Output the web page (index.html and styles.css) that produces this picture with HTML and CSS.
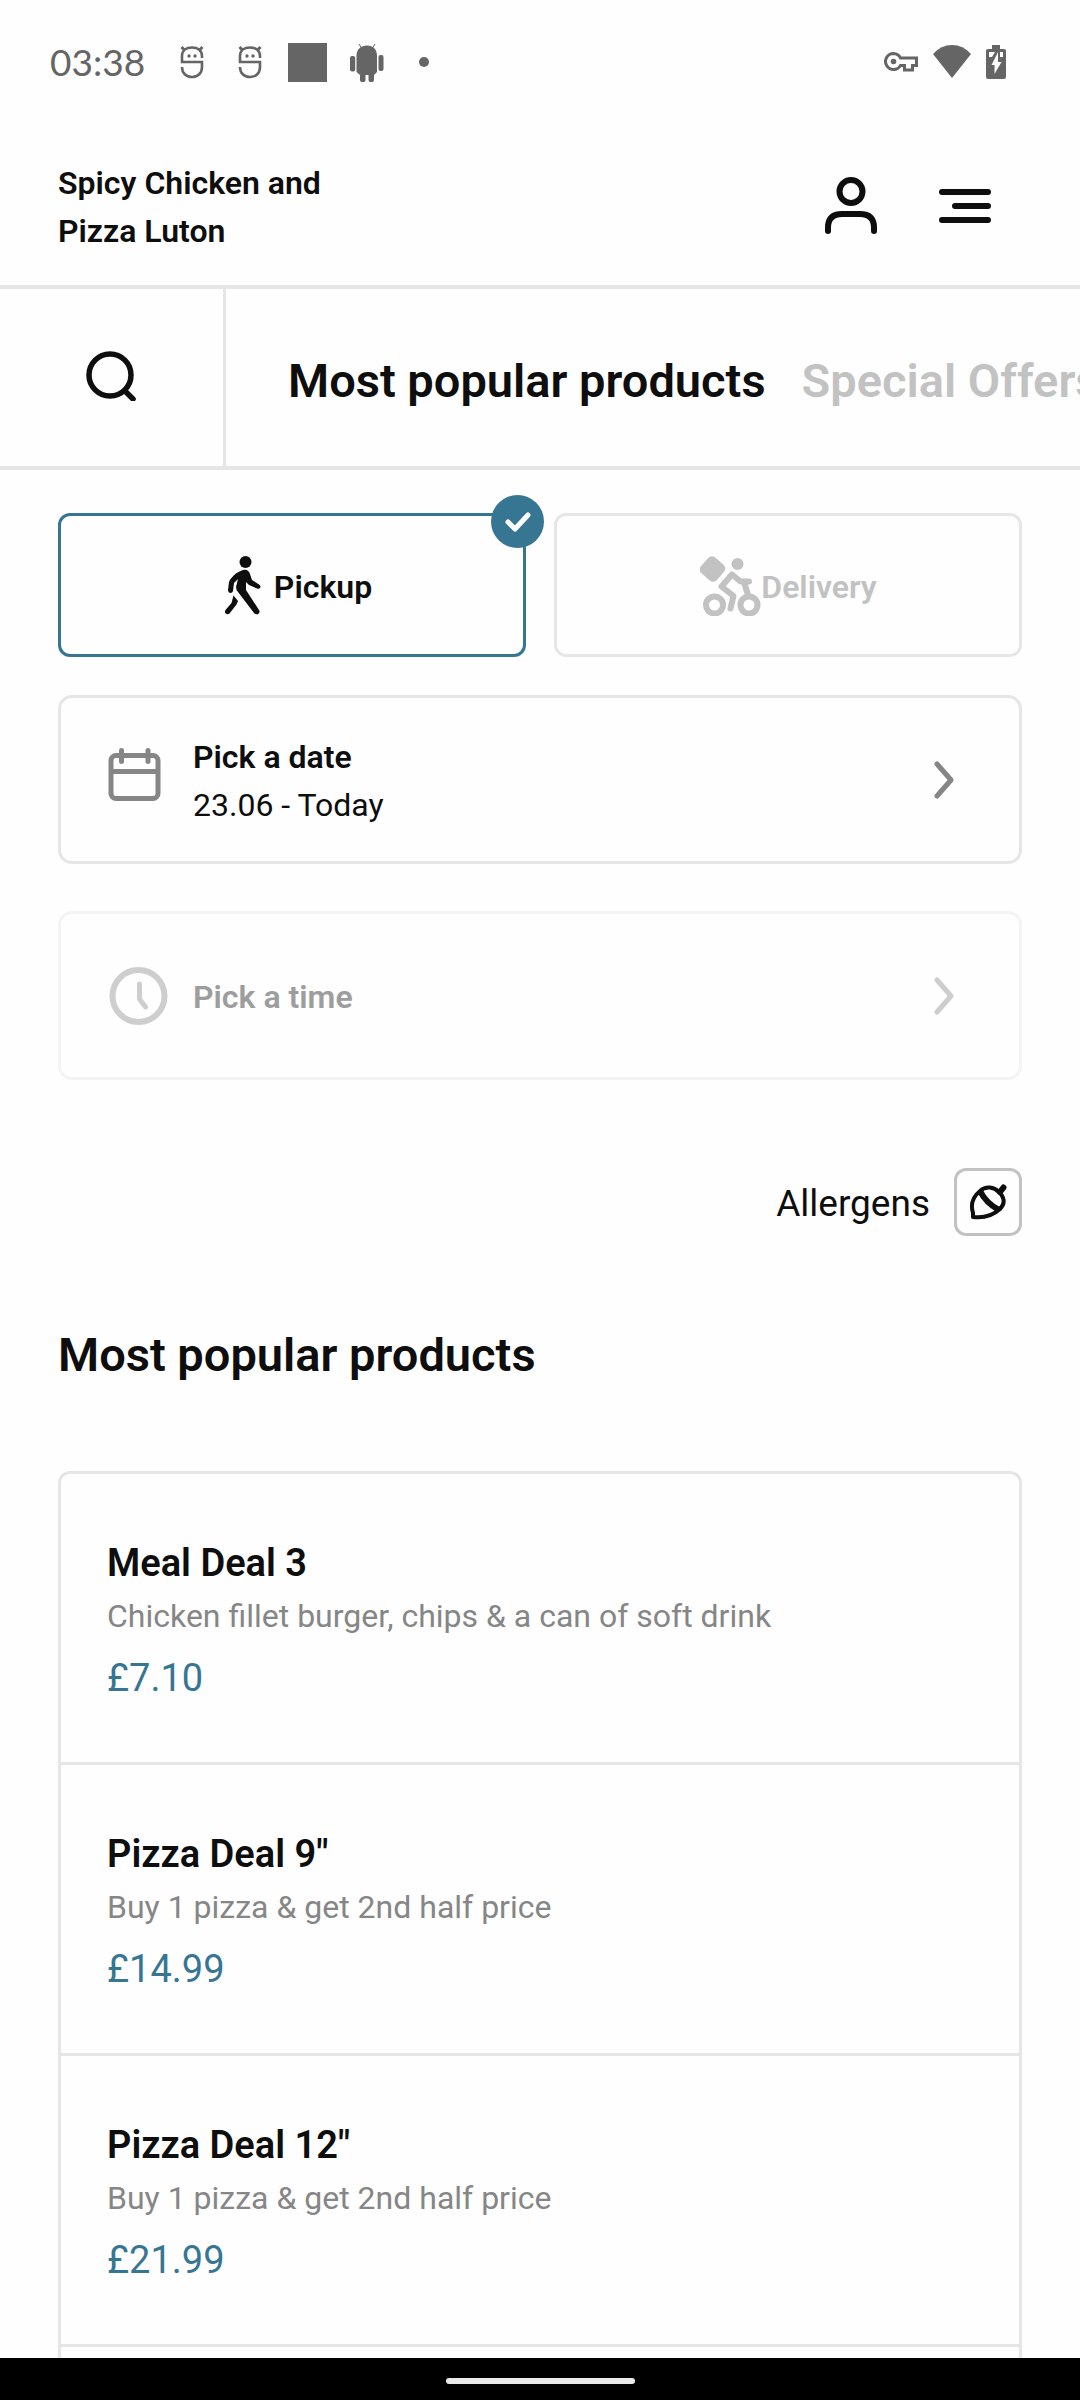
FILE: index.html
```html
<!DOCTYPE html>
<html lang="en">
<head>
  <meta charset="utf-8">
  <meta name="viewport" content="width=device-width, initial-scale=1">
  <title>Spicy Chicken and Pizza Luton</title>
  <link rel="stylesheet" href="styles.css">
</head>
<body>
  <svg class="sprite" aria-hidden="true">
    <symbol id="face" viewBox="0 0 24 34">
      <g fill="none" stroke="currentColor" stroke-width="2.600">
        <path d="M22 13V11C22 5.500 18 2.500 12 2.500S2 5.500 2 11v6h20v5c0 6-4 10-10 10S2 28 2 22"/>
        <path d="M1.500 2l3 3M22.500 2l-3 3" stroke-width="3"/>
      </g>
      <circle cx="9" cy="11" r="1.700" fill="currentColor"/><circle cx="15" cy="11" r="1.700" fill="currentColor"/>
    </symbol>
    <symbol id="chevron" viewBox="0 0 20 38">
      <path d="M3 3l14 16L3 35" fill="none" stroke="currentColor" stroke-width="5" stroke-linecap="round" stroke-linejoin="round"/>
    </symbol>
  </svg>

  <div class="status">
    <span class="clock">03:38</span>
    <svg class="face" width="24" height="34"><use href="#face"/></svg>
    <svg class="face" width="24" height="34"><use href="#face"/></svg>
    <span class="square"></span>
    <svg width="34" height="39" viewBox="0 0 34 39" fill="currentColor">
      <path d="M9 1l2.500 4M25 1l-2.500 4" stroke="currentColor" stroke-width="1"/>
      <path d="M6.500 13C6.500 6 11 2.500 17 2.500S27 6 27 13v16l-3 3v5a2.500 2 0 0 1-5.500 0v-5h-3v5a2.500 2 0 0 1-5.500 0v-5l-3.500-3z"/>
      <rect x="0" y="13" width="5.200" height="15.500" rx="2"/><rect x="28.500" y="12" width="5" height="16" rx="2"/>
    </svg>
    <span class="dot"></span>
    <div class="system">
      <svg width="34" height="20" viewBox="0 0 34 20">
        <path d="M9.500 1.500a8 8 0 1 0 7 12H20.500v4.500h8v-4.500h4v-7.500H16.500a8 8 0 0 0-7-4.500z" fill="none" stroke="currentColor" stroke-width="3"/>
        <circle cx="9.500" cy="9.500" r="2.800" fill="currentColor"/>
      </svg>
      <svg width="40" height="34" viewBox="0 0 40 34"><path d="M1 9Q9 0 20 0T39 9L20 33z" fill="currentColor"/></svg>
      <svg width="20" height="34" viewBox="0 0 20 34">
        <path d="M6 0h8v4h4a2 2 0 0 1 2 2v26a2 2 0 0 1-2 2H2a2 2 0 0 1-2-2V6a2 2 0 0 1 2-2h4z" fill="currentColor"/>
        <path d="M3 7h6l-3 5H3zM14 7h3v5h-3zM12 7v10h3.500L8.500 29v-9H5.500z" fill="#fefefe"/>
      </svg>
    </div>
  </div>

  <header class="header">
    <h1 class="brand">Spicy Chicken and Pizza Luton</h1>
    <div class="actions">
      <button class="icon-button" type="button" aria-label="Account">
        <svg width="52" height="60" viewBox="0 0 52 60" fill="none" stroke="currentColor" stroke-width="6" stroke-linecap="round">
          <circle cx="26" cy="14.500" r="11.500"/><path d="M3 54v-3.500Q3 37 17 37H35Q49 37 49 50.500V54"/>
        </svg>
      </button>
      <button class="icon-button" type="button" aria-label="Menu">
        <svg width="52" height="36" viewBox="0 0 52 36" fill="none" stroke="currentColor" stroke-width="6" stroke-linecap="round">
          <path d="M3 3h46M16 17h33M3 31h46"/>
        </svg>
      </button>
    </div>
  </header>

  <nav class="tabs" aria-label="Categories">
    <button class="search" type="button" aria-label="Search">
      <svg width="50" height="50" viewBox="0 0 50 50" fill="none" stroke="currentColor" stroke-width="5.500" stroke-linecap="round">
        <circle cx="24" cy="24" r="21"/><path d="M40 41l7 7"/>
      </svg>
    </button>
    <div class="tab-list">
      <a class="tab active" href="#popular">Most popular products</a>
      <a class="tab" href="#offers">Special Offers</a>
    </div>
  </nav>

  <main class="main">
    <div class="modes">
      <button class="mode selected" type="button" aria-pressed="true">
        <svg width="62" height="62" viewBox="0 0 62 62" fill="currentColor">
          <circle cx="33.500" cy="8" r="6"/>
          <path d="M31 16c4-1 6 1 7 4l2 6 7 4.500c3 2 1 5-2 4l-8-3.500-3-3v8l13 20c2 3-2 6-5 3L26 38q-2-2-2-5l2-8-4 4-1 8c-1 3-5 2.500-5-1l1-8q.5-2 2-3.500c3-4 7-7 12-8.500zM21.500 41.500l4.500 5.500-1.500 3.500-7 9c-2 2-6 0-4-3.500l6-7z"/>
        </svg>
        <span class="mode-name">Pickup</span>
        <span class="badge">
          <svg width="26" height="20" viewBox="0 0 26 20" fill="none" stroke="currentColor" stroke-width="5" stroke-linecap="round" stroke-linejoin="round"><path d="M3 10l7 7L23 3"/></svg>
        </span>
      </button>
      <button class="mode" type="button" aria-pressed="false">
        <svg width="62" height="62" viewBox="0 0 62 62" fill="none" stroke="currentColor">
          <rect x="3" y="4.500" width="21" height="21" rx="5" transform="rotate(41 13.500 15)" fill="currentColor" stroke="none"/>
          <circle cx="38.500" cy="10" r="6" fill="currentColor" stroke="none"/>
          <circle cx="15.500" cy="51" r="8.500" stroke-width="6"/><circle cx="50" cy="51" r="8.500" stroke-width="6"/>
          <path d="M49 41L45 28M50 27.500h-8.500L33 20.500 22.500 32.500l12 9.500-3 12.500" stroke-width="6" stroke-linecap="round" stroke-linejoin="round"/>
        </svg>
        <span class="mode-name">Delivery</span>
      </button>
    </div>

    <button class="picker" type="button">
      <svg width="64" height="64" viewBox="0 0 64 64" fill="none" stroke="currentColor" stroke-width="5">
        <rect x="5" y="7.500" width="47" height="43" rx="5"/><path d="M5 23.500h47"/><path d="M15.500 2.500v11M42 2.500v11" stroke-linecap="round"/>
      </svg>
      <span class="picker-text"><strong>Pick a date</strong><span>23.06 - Today</span></span>
      <svg class="chevron" width="20" height="38"><use href="#chevron"/></svg>
    </button>

    <button class="picker off" type="button" disabled>
      <svg width="64" height="64" viewBox="0 0 64 64" fill="none" stroke="currentColor" stroke-linecap="round" stroke-linejoin="round">
        <circle cx="32.500" cy="32" r="26" stroke-width="6"/><path d="M33.500 20v15l6 8" stroke-width="5"/>
      </svg>
      <span class="picker-text"><strong>Pick a time</strong></span>
      <svg class="chevron" width="20" height="38"><use href="#chevron"/></svg>
    </button>

    <div class="allergens">
      <label class="allergens-label" for="allergens">Allergens</label>
      <button class="nut" id="allergens" type="button">
        <svg width="38" height="38" viewBox="0 0 38 38" fill="none" stroke="currentColor" stroke-width="4" stroke-linecap="round" stroke-linejoin="round">
          <path d="M4 30Q0 17 11 8C17 2.500 25 4 30 9S37 20 31 26Q20 36 4 34z"/>
          <path d="M11 8Q17 20 30 27" stroke-width="6" stroke-linecap="butt"/><path d="M31 9L34.500 4.500" stroke-width="6"/>
        </svg>
      </button>
    </div>

    <h2 class="section-title" id="popular">Most popular products</h2>
    <ul class="products">
      <li class="product"><h3>Meal Deal 3</h3><p class="description">Chicken fillet burger, chips &amp; a can of soft drink</p><p class="price">£7.10</p></li>
      <li class="product"><h3>Pizza Deal 9"</h3><p class="description">Buy 1 pizza &amp; get 2nd half price</p><p class="price">£14.99</p></li>
      <li class="product"><h3>Pizza Deal 12"</h3><p class="description">Buy 1 pizza &amp; get 2nd half price</p><p class="price">£21.99</p></li>
      <li class="product"></li>
    </ul>
  </main>

  <div class="navbar"><span class="handle"></span></div>
</body>
</html>
```
FILE: styles.css
```css
* { box-sizing: border-box; }

body {
  --ink: #0e0e0e;
  --line: #e6e6e6;
  --accent: #367693;
  --muted: #868686;
  --pale: #c2c2c2;
  display: flex;
  flex-direction: column;
  height: 100vh;
  margin: 0;
  background: #fefefe;
  color: var(--ink);
  font-family: Roboto, "Liberation Sans", sans-serif;
  font-size: 32px;
  line-height: 48px;
}

h1, h2, h3, p, ul { margin: 0; padding: 0; }
svg { display: block; flex: none; }
.sprite { position: absolute; width: 0; height: 0; }

button {
  padding: 0;
  border: 0;
  background: none;
  color: inherit;
  font: inherit;
  text-align: left;
}

/* System status bar */
.status {
  display: flex;
  flex: none;
  align-items: center;
  padding: 38px 74px 42px 50px;
  color: #656565;
}
.clock { width: 130px; font-family: Lato, sans-serif; font-size: 37px; }
.face { margin-right: 34px; }
.square { width: 39px; height: 39px; margin: 0 23px 0 -8px; background: currentColor; }
.dot { width: 10px; height: 10px; margin-left: 35px; border-radius: 50%; background: currentColor; }
.system { display: flex; align-items: center; gap: 14px; margin-left: auto; }

/* Brand and account actions */
.header {
  display: flex;
  flex: none;
  align-items: center;
  justify-content: space-between;
  padding: 31px 89px 30px 58px;
  border-bottom: 4px solid var(--line);
}
.brand { max-width: 320px; font-size: 32px; font-weight: 600; }
.actions { display: flex; align-items: center; gap: 62px; }

/* Category tabs */
.tabs {
  display: flex;
  flex: none;
  border-bottom: 4px solid var(--line);
}
.search {
  display: flex;
  flex: none;
  align-items: center;
  padding: 0 87px 3px 86px;
  border-right: 3px solid var(--line);
}
.tab-list { display: flex; gap: 36px; padding: 64px 0 57px 62px; overflow: hidden; white-space: nowrap; }
.tab, .section-title { font-size: 47px; font-weight: 600; line-height: 56px; }
.tab { flex: none; color: var(--pale); text-decoration: none; }
.tab.active { color: var(--ink); }

.main {
  flex: 1;
  min-height: 0;
  padding: 43px 58px 0;
  overflow: auto;
  scrollbar-width: none;
}

/* Pickup or delivery */
.modes { display: grid; grid-template-columns: 1fr 1fr; gap: 28px; margin-bottom: 38px; }
.mode {
  position: relative;
  display: flex;
  align-items: center;
  justify-content: center;
  padding: 38px 0;
  border: 3px solid var(--line);
  border-radius: 12px;
  color: var(--pale);
  font-weight: 600;
}
.mode.selected { border-color: var(--accent); color: var(--ink); }
.mode-name { padding-top: 3px; }
.badge {
  position: absolute;
  top: -21px;
  right: -21px;
  display: grid;
  place-items: center;
  width: 53px;
  height: 53px;
  border-radius: 50%;
  background: var(--accent);
  color: #fff;
}

/* Date and time */
.picker {
  display: flex;
  align-items: center;
  gap: 23px;
  width: 100%;
  min-height: 169px;
  margin-bottom: 47px;
  padding: 0 65px 0 45px;
  border: 3px solid var(--line);
  border-radius: 14px;
  color: var(--muted);
}
.picker-text { flex: 1; padding-top: 2px; color: var(--ink); }
.picker-text strong, .picker-text span { display: block; }
.picker-text strong { font-weight: 600; }
.picker.off { border-color: #f4f4f4; color: #cecece; }
.off .picker-text { color: #9d9d9d; }

.allergens {
  display: flex;
  align-items: center;
  justify-content: flex-end;
  gap: 24px;
  margin: 88px 0 91px;
  font-size: 37px;
}
.allergens-label { padding-top: 3px; }
.nut { padding: 12px; border: 3px solid var(--pale); border-radius: 12px; }

/* Products */
.section-title { margin-bottom: 88px; }
.products {
  border: 3px solid var(--line);
  border-bottom: 0;
  border-radius: 12px 12px 0 0;
  list-style: none;
}
.product { min-height: 120px; padding: 61px 46px 56px; }
.product + .product { border-top: 3px solid var(--line); }
.product h3, .price { font-size: 38px; line-height: 56px; }
.product h3 { font-weight: 600; }
.description { color: var(--muted); line-height: 50px; }
.price { margin-top: 9px; color: var(--accent); }

.navbar { display: flex; flex: none; justify-content: center; padding: 20px 0 16px; background: #000; }
.handle { width: 189px; height: 6px; border-radius: 3px; background: #e9e9e9; }
```
